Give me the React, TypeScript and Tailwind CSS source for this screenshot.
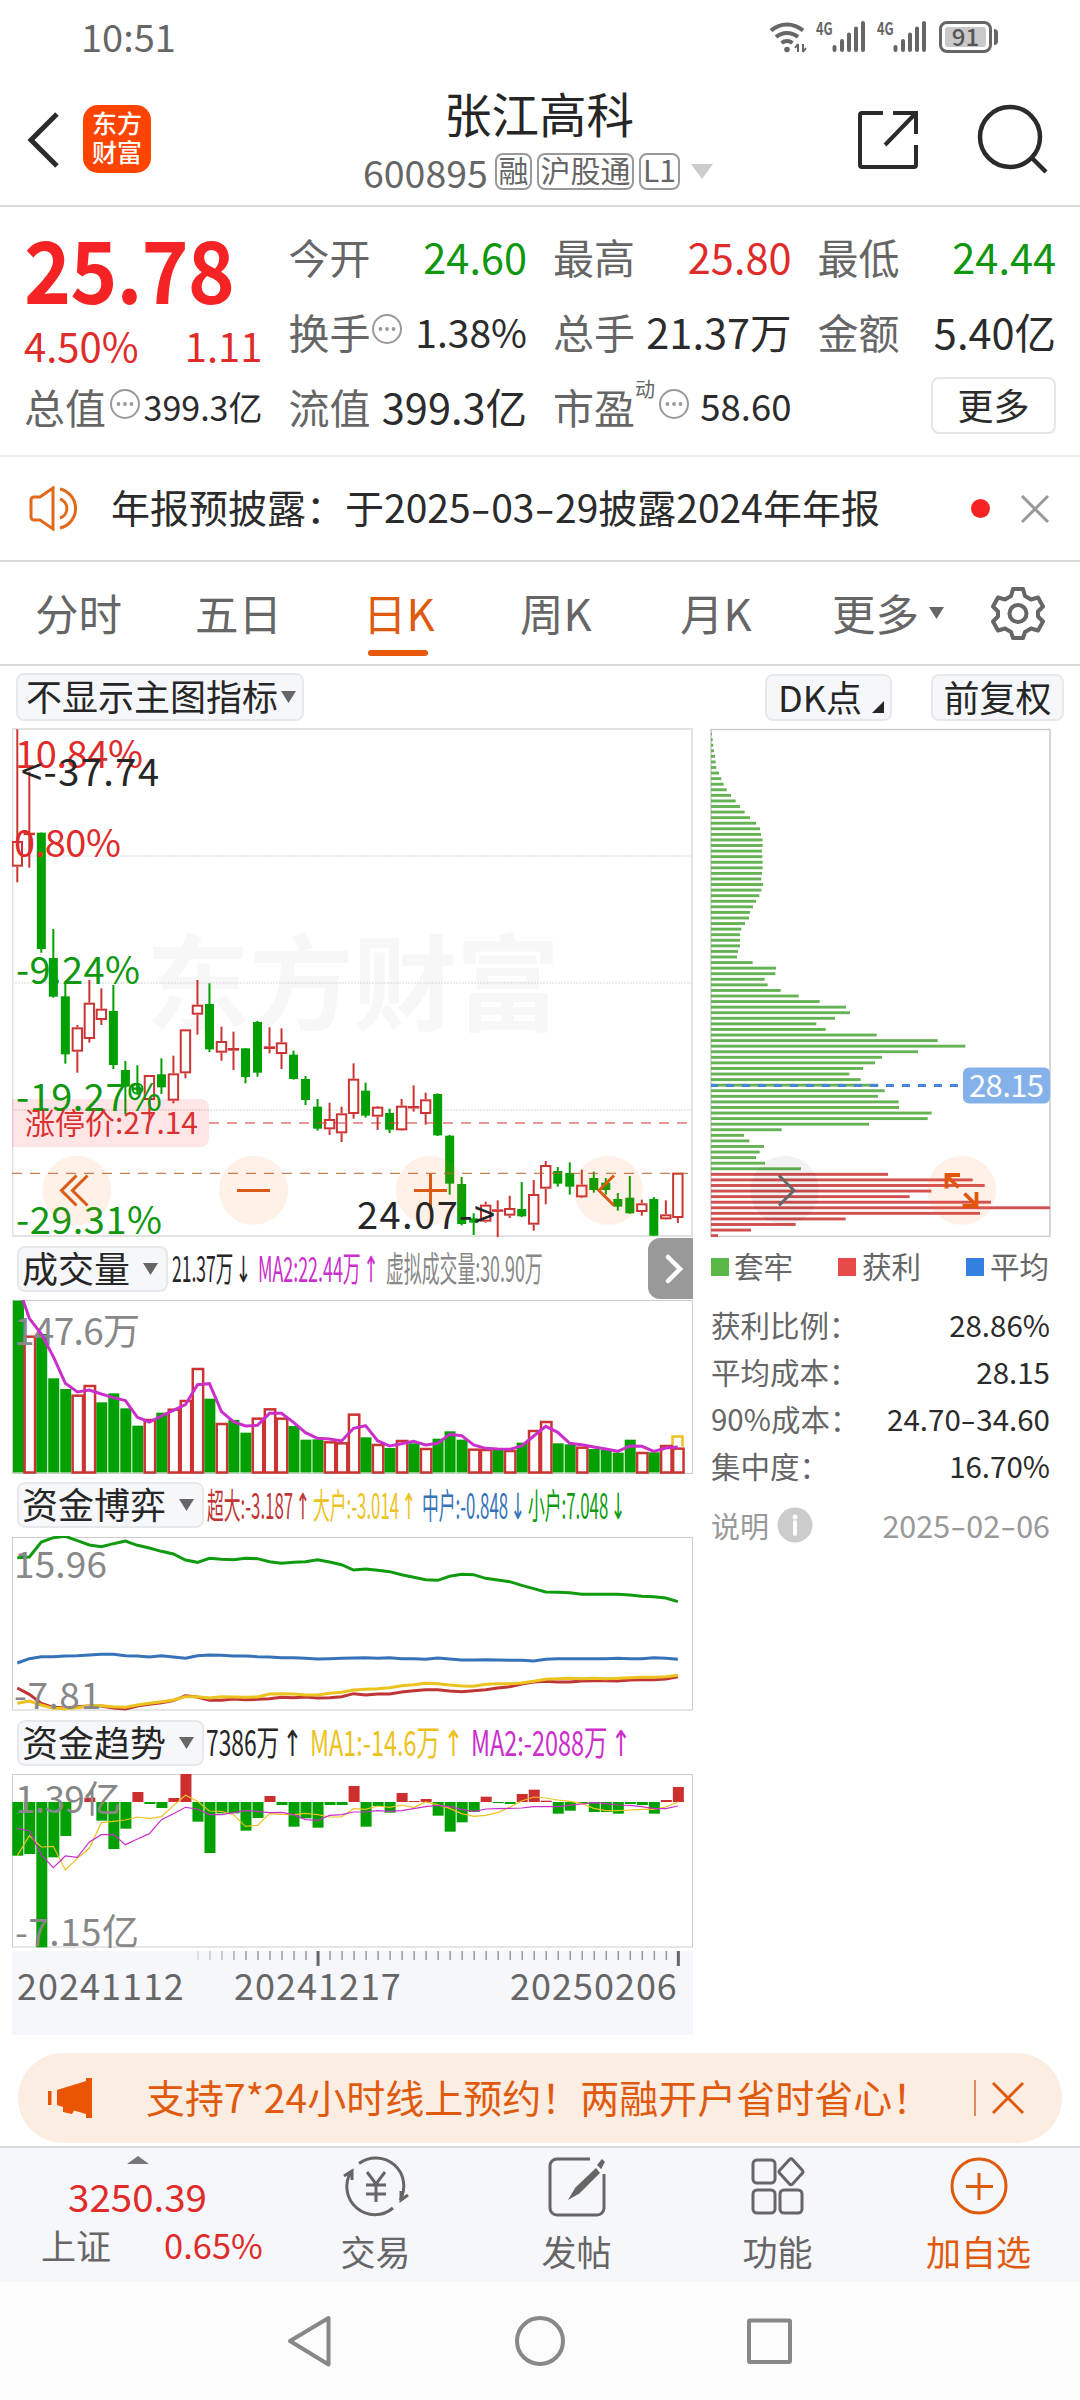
import React from "react";

const GREEN = "#00a000";
const RED = "#cc3333";

// [high, top, bottom, low, isUp] in thirds of a pixel from the top of the chart
const candles: [number, number, number, number, number][] = [
  [28, 363, 440, 487, 1], [155, 338, 345, 443, 1], [338, 338, 687, 698, 0], [627, 714, 830, 833, 0],
  [792, 829, 1003, 1031, 0], [915, 922, 995, 1058, 1], [780, 848, 957, 968, 1], [805, 866, 900, 915, 1],
  [795, 873, 1035, 1047, 0], [1023, 1050, 1100, 1182, 0], [1036, 1103, 1109, 1115, 0], [1065, 1065, 1140, 1200, 1],
  [1015, 1063, 1102, 1122, 0], [1007, 1060, 1142, 1150, 1], [928, 928, 1060, 1075, 1], [780, 854, 884, 944, 1],
  [790, 852, 988, 996, 0], [920, 963, 998, 1022, 1], [935, 984, 992, 1050, 1], [985, 985, 1071, 1090, 0],
  [903, 906, 1058, 1070, 0], [922, 979, 987, 1000, 1], [925, 967, 1002, 1047, 1], [992, 1004, 1077, 1079, 0],
  [1068, 1077, 1140, 1155, 0], [1137, 1160, 1226, 1232, 0], [1148, 1197, 1228, 1245, 1], [1160, 1180, 1240, 1266, 1],
  [1030, 1076, 1182, 1196, 1], [1088, 1112, 1187, 1193, 0], [1158, 1160, 1190, 1230, 1], [1166, 1179, 1229, 1239, 0],
  [1137, 1157, 1231, 1232, 1], [1096, 1158, 1165, 1175, 1], [1118, 1138, 1182, 1214, 1], [1120, 1122, 1246, 1248, 0],
  [1245, 1247, 1391, 1424, 0], [1371, 1392, 1512, 1516, 0], [1480, 1495, 1508, 1545, 0], [1445, 1454, 1505, 1508, 1],
  [1441, 1468, 1475, 1551, 1], [1427, 1464, 1487, 1494, 1], [1386, 1467, 1489, 1491, 0], [1380, 1422, 1514, 1532, 1],
  [1323, 1335, 1406, 1453, 1], [1341, 1353, 1391, 1400, 0], [1327, 1359, 1400, 1424, 0], [1349, 1394, 1432, 1434, 1],
  [1355, 1374, 1410, 1418, 0], [1374, 1388, 1410, 1424, 0], [1419, 1437, 1460, 1472, 0], [1368, 1433, 1480, 1481, 0],
  [1439, 1450, 1476, 1487, 1], [1431, 1437, 1547, 1547, 0], [1441, 1483, 1498, 1499, 1], [1358, 1358, 1494, 1509, 1],
];

const volumes = [
  212, 317, 312, 445, 477, 494, 465, 517, 490, 535, 587, 567, 548, 536, 510, 414, 506, 579, 570, 608, 563, 535, 563, 588,
  629, 628, 634, 637, 551, 622, 642, 654, 630, 640, 654, 626, 604, 629, 656, 657, 659, 660, 638, 600, 573, 640, 643, 650,
  657, 660, 668, 629, 666, 667, 645, 653,
];
const volumeUp = [1, 5, 6, 11, 13, 14, 15, 17, 20, 21, 22, 26, 27, 28, 30, 32, 34, 38, 39, 41, 43, 44, 47, 52, 54, 55];
const volumeMa = [
  160, 265, 312, 380, 460, 486, 480, 492, 503, 512, 562, 576, 558, 541, 524, 464, 461, 545, 575, 588, 586, 550, 550, 577,
  608, 625, 627, 633, 595, 587, 632, 648, 641, 634, 645, 640, 613, 617, 645, 655, 657, 658, 648, 618, 589, 607, 640, 644,
  651, 657, 664, 648, 649, 664, 654, 651,
];

const small = [
  983, 981, 936, 923, 919, 932, 945, 950, 941, 933, 946, 954, 964, 972, 990, 997, 985, 988, 989, 985, 986, 995, 1000, 997,
  995, 989, 996, 1004, 1020, 1017, 1021, 1025, 1034, 1042, 1049, 1051, 1039, 1033, 1034, 1045, 1050, 1055, 1066, 1076,
  1086, 1087, 1088, 1093, 1093, 1093, 1093, 1095, 1099, 1100, 1104, 1115,
];
const middle = [
  1299, 1286, 1280, 1280, 1278, 1277, 1275, 1273, 1273, 1277, 1278, 1281, 1277, 1281, 1285, 1277, 1275, 1276, 1278, 1278,
  1280, 1281, 1283, 1283, 1285, 1287, 1286, 1285, 1284, 1283, 1285, 1283, 1286, 1286, 1288, 1284, 1287, 1290, 1290, 1289,
  1290, 1291, 1291, 1293, 1288, 1286, 1286, 1286, 1286, 1286, 1285, 1286, 1286, 1283, 1285, 1288,
];
const superBig = [
  1374, 1393, 1420, 1432, 1434, 1430, 1428, 1428, 1434, 1437, 1428, 1423, 1418, 1412, 1397, 1401, 1411, 1411, 1407, 1409,
  1408, 1406, 1402, 1403, 1401, 1404, 1403, 1400, 1391, 1395, 1392, 1392, 1386, 1382, 1379, 1379, 1383, 1385, 1382, 1379,
  1374, 1370, 1362, 1356, 1354, 1356, 1356, 1353, 1352, 1352, 1353, 1350, 1349, 1349, 1347, 1340,
];
const big = [
  1420, 1413, 1425, 1435, 1436, 1433, 1427, 1427, 1430, 1432, 1425, 1420, 1415, 1410, 1400, 1400, 1404, 1400, 1401, 1402,
  1401, 1392, 1391, 1392, 1395, 1395, 1390, 1387, 1380, 1378, 1376, 1373, 1367, 1364, 1360, 1361, 1365, 1368, 1369, 1363,
  1361, 1361, 1359, 1354, 1348, 1346, 1345, 1346, 1345, 1346, 1345, 1343, 1342, 1342, 1340, 1336,
];

const trend = [
  497, 492, 772, 502, 438, 336, 323, 392, 477, 416, 306, 342, 354, 324, 252, 395, 489, 370, 370, 422, 384, 318, 345, 410,
  385, 413, 345, 345, 288, 410, 348, 368, 309, 333, 327, 377, 425, 397, 366, 320, 339, 342, 312, 299, 332, 371, 362, 340,
  366, 366, 371, 342, 345, 371, 330, 291,
];
const trendMa1 = [
  497, 437, 471, 469, 540, 505, 475, 398, 394, 390, 381, 386, 380, 347, 316, 334, 363, 364, 374, 409, 406, 371, 373, 374,
  370, 374, 381, 381, 356, 358, 348, 352, 345, 353, 336, 344, 355, 371, 379, 376, 368, 352, 333, 321, 324, 330, 334, 340,
  355, 362, 362, 360, 358, 358, 351, 336,
];
const trendMa2 = [
  415, 422, 495, 533, 498, 502, 456, 434, 433, 464, 447, 431, 389, 371, 352, 357, 374, 374, 368, 362, 364, 368, 367, 374,
  389, 391, 376, 374, 366, 366, 362, 364, 362, 356, 350, 346, 350, 358, 365, 357, 356, 355, 354, 350, 350, 350, 346, 342,
  338, 341, 345, 346, 350, 356, 356, 348,
];

const chips = [
  66, 68, 70, 72, 75, 77, 79, 87, 94, 101, 110, 123, 137, 150, 164, 180, 198, 210, 213, 218, 218, 216, 217, 218, 218, 216,
  214, 219, 214, 208, 198, 189, 180, 177, 165, 154, 150, 150, 150, 144, 141, 188, 258, 256, 224, 233, 272, 326, 389, 468,
  480, 435, 379, 407, 560, 743, 826, 684, 576, 555, 519, 478, 512, 565, 584, 564, 626, 627, 725, 713, 537, 275, 162, 178,
  222, 209, 198, 225, 333, 594, 848, 884, 724, 659, 903, 1080, 870, 467, 317, 183, 84,
];

const cx = (i: number) => 17.3 + i * 12.01;
const points = (data: number[], base: number) => data.map((v, i) => `${cx(i)},${base + v / 3}`).join(" ");

function Candles() {
  return (
    <svg className="block" width="681" height="509" viewBox="12 728 681 509">
      <text x="146" y="1023" fontSize="104" fontWeight="700" fill="#f7f7f7" textLength="414">东方财富</text>
      {[856, 983, 1110].map((y) => (
        <line key={y} x1="12" x2="692" y1={y} y2={y} stroke="#e3e3e3" strokeWidth="1.5" strokeDasharray="2 1" />
      ))}
      <rect x="12.5" y="729" width="679.5" height="507" fill="none" stroke="#e2e2e2" strokeWidth="2" />
      {candles.map(([h, t, b, l, up], i) => {
        const x = cx(i);
        const y = (v: number) => 720 + v / 3;
        if (!up) {
          return (
            <g key={i} fill={GREEN}>
              <rect x={x - 1} y={y(h)} width="2" height={(l - h) / 3} />
              <rect x={x - 4.5} y={y(t)} width="9" height={(b - t) / 3} />
            </g>
          );
        }
        return (
          <g key={i} stroke={RED} strokeWidth="2">
            <line x1={x} x2={x} y1={y(h)} y2={y(t)} />
            <line x1={x} x2={x} y1={y(b)} y2={y(l)} />
            <rect x={x - 4.7} y={y(t) + 1} width="9.4" height={Math.max((b - t) / 3 - 2, 0.5)} fill={b - t > 13 ? "#fff" : RED} />
          </g>
        );
      })}
      <g fill="none" stroke={GREEN} strokeWidth="2">
        <circle cx="137.5" cy="1088.7" r="5" />
        <path d="M132 1088.7h11M137.5 1083v11" />
      </g>
      <path d="M12 1099h189a8 8 0 0 1 8 8v32a8 8 0 0 1-8 8H12z" fill="#ff0000" fillOpacity=".1" />
      <line x1="209" x2="690" y1="1123" y2="1123" stroke="#d43c3c" strokeOpacity=".7" strokeWidth="1.7" strokeDasharray="10 8" />
      <line x1="12" x2="690" y1="1173.3" y2="1173.3" stroke="#b9622c" strokeOpacity=".8" strokeWidth="1.3" strokeDasharray="10 8" />
      <g fontSize="38">
        <g fill="#e02b2b">
          <text x="15" y="768" textLength="128">10.84%</text>
          <text x="14" y="857" textLength="107">0.80%</text>
        </g>
        <text x="21" y="786" textLength="138" fill="#262626">&lt;-37.74</text>
        <g fill="#0f970f">
          <text x="16" y="984" textLength="124">-9.24%</text>
          <text x="16" y="1111" textLength="146">-19.27%</text>
          <text x="16" y="1234" textLength="146">-29.31%</text>
        </g>
      </g>
      <text x="25" y="1133.5" fontSize="30" textLength="173" fill="#d93030">涨停价:27.14</text>
      <g fill="#ff6a1a" fillOpacity=".1">
        <circle cx="76.7" cy="1190.3" r="34.5" />
        <circle cx="253.6" cy="1190.3" r="34.5" />
        <circle cx="430.3" cy="1190.3" r="34.5" />
        <circle cx="608.3" cy="1190.3" r="34.5" />
      </g>
      <g fill="none" stroke="#d95a14" strokeWidth="3">
        <path d="M76.5 1175.5l-15 15 15 15M87.5 1175.5l-15 15 15 15" />
        <path d="M237 1190.5h33M414 1190.5h33M430.5 1174v33" />
        <path d="M614 1175.5l-15 15 15 15" />
      </g>
      <text x="357" y="1229" fontSize="38" textLength="138" fill="#262626">24.07-&gt;</text>
    </svg>
  );
}

function VolumeChart() {
  return (
    <svg className="block" width="681" height="174" viewBox="12 1300 681 174">
      <rect x="12.5" y="1300.5" width="680" height="173" fill="none" stroke="#ccc" />
      <path d="M672.5 1446.5v-10h10v10" fill="none" stroke="#ecc21e" strokeWidth="2.5" />
      {volumes.map((v, i) => {
        const y = 1230 + v / 3;
        const x = cx(i) + 0.5;
        return volumeUp.includes(i) ? (
          <rect key={i} x={x - 5.2} y={y + 1} width="10.4" height={1471.5 - y} fill="#fff" stroke={RED} strokeWidth="2.5" />
        ) : (
          <rect key={i} x={Math.max(x - 5.6, 13)} y={y} width="11" height={1472.5 - y} fill={GREEN} />
        );
      })}
      <text x="14" y="1345" fontSize="37" textLength="126" fill="#888">147.6万</text>
      <polyline points={points(volumeMa, 1230)} fill="none" stroke="#cb2fcb" strokeWidth="3" />
    </svg>
  );
}

function FundChart() {
  return (
    <svg className="block" width="681" height="175" viewBox="12 1536 681 175">
      <rect x="12.5" y="1537.5" width="680" height="172.5" fill="none" stroke="#ccc" />
      <g fill="none" strokeWidth="3">
        <polyline points={points(small, 1230)} stroke="#109a10" />
        <polyline points={points(middle, 1230)} stroke="#3672b8" />
        <polyline points={points(superBig, 1230)} stroke="#bf3535" />
        <polyline points={points(big, 1230)} stroke="#ecc21e" />
      </g>
      <text x="14" y="1577.5" fontSize="37" textLength="93" fill="#888">15.96</text>
      <text x="14" y="1709" fontSize="37" textLength="87" fill="#888">-7.81</text>
    </svg>
  );
}

function TrendChart() {
  return (
    <svg className="block" width="681" height="174" viewBox="12 1774 681 174">
      <rect x="12.5" y="1774.5" width="680" height="172.5" fill="none" stroke="#ccc" />
      {trend.map((v, i) => (
        <rect
          key={i}
          x={Math.max(cx(i) - 5, 12)}
          y={1690 + Math.min(v, 336) / 3}
          width="11"
          height={Math.abs(v - 336) / 3}
          fill={v < 336 ? "#cd2f2f" : GREEN}
        />
      ))}
      <polyline points={points(trendMa1, 1690)} fill="none" stroke="#ecc21e" strokeWidth="1.2" />
      <polyline points={points(trendMa2, 1690)} fill="none" stroke="#cb2fcb" strokeWidth="1.2" />
      <text x="15" y="1813" fontSize="37" textLength="106" fill="#888">1.39亿</text>
      <text x="15" y="1945.5" fontSize="37" textLength="124" fill="#888">-7.15亿</text>
    </svg>
  );
}

function TimeAxis() {
  return (
    <div className="mt-[3px] h-[84px] w-[681px] bg-[#f6f7fa]">
      <svg className="block" width="681" height="15" viewBox="12 1951 681 15">
        {Array.from({ length: 41 }, (_, k) => k + 15).map((i) => {
          const major = i === 25 || i === 55;
          return (
            <line
              key={i}
              x1={cx(i) + 0.5}
              x2={cx(i) + 0.5}
              y1="1951"
              y2={major ? 1966 : 1960}
              stroke={major ? "#666" : "#999"}
              strokeOpacity={Math.min(1, (i - 13) / 6)}
              strokeWidth={major ? 3 : 1.5}
            />
          );
        })}
      </svg>
      <div className="flex text-[36px] leading-none tracking-[1px] text-[#666]">
        <span className="ml-[5px] w-[217px]">20241112</span>
        <span className="w-[276px]">20241217</span>
        <span>20250206</span>
      </div>
    </div>
  );
}

function ChipChart() {
  return (
    <svg className="block" width="342" height="509" viewBox="710 728 342 509">
      <rect x="711" y="729.5" width="339" height="507" fill="none" stroke="#c9c9c9" strokeWidth="1.5" />
      {chips.map((v, k) => (
        <rect key={k} x="711" y={720 + (42 + k * 16.72) / 3 - 1.4} width={690 + v / 3 - 711} height="2.9" fill={k < 79 ? "#65b354" : "#d35050"} />
      ))}
      <line x1="711" x2="718" y1="1085.5" y2="1085.5" stroke="#4484d6" strokeWidth="3" />
      <line x1="726" x2="960" y1="1085.5" y2="1085.5" stroke="#4484d6" strokeWidth="3" strokeDasharray="8 8" />
      <rect x="963" y="1067.5" width="87" height="36" rx="6" fill="#85b1ea" />
      <text x="969" y="1097" fontSize="31" textLength="75" fill="#fff">28.15</text>
      <circle cx="784.7" cy="1190.3" r="34.5" fill="#000" fillOpacity=".05" />
      <path d="M779 1175.5l15 15-15 15" fill="none" stroke="#666" strokeWidth="3" />
      <circle cx="961.7" cy="1190.3" r="34.5" fill="#ff6a1a" fillOpacity=".1" />
      <path
        d="M946.5 1188.5v-13.500h13.500M946.5 1175.5l12 12M976.5 1192v14h-14M976.5 1205.5l-12-12"
        fill="none"
        stroke="#e2560c"
        strokeWidth="3.8"
      />
    </svg>
  );
}

function Dots() {
  return (
    <svg className="mb-[6px] shrink-0" width="32" height="32" viewBox="0 0 32 32">
      <circle cx="16" cy="16" r="14" fill="none" stroke="#999" strokeWidth="2" />
      <g fill="#999">
        <circle cx="9.5" cy="16" r="1.9" />
        <circle cx="16" cy="16" r="1.9" />
        <circle cx="22.5" cy="16" r="1.9" />
      </g>
    </svg>
  );
}

// Digits joined by wide hyphens
function Dashed({ text }: { text: string }) {
  return (
    <>
      {text.split("-").map((part, i) => (
        <React.Fragment key={i}>
          {i > 0 && <span className="mx-[.09em] inline-block scale-x-150">-</span>}
          {part}
        </React.Fragment>
      ))}
    </>
  );
}

type QuoteProps = {
  label: string;
  value: string;
  color?: string;
  size?: string;
  extra?: React.ReactNode;
};

function Quote({ label, value, color = "text-[#2b2b2b]", size = "text-[41.5px]", extra }: QuoteProps) {
  return (
    <div className="flex h-[75px] items-center whitespace-nowrap">
      <span className="text-[41px] text-[#666]">{label}</span>
      {extra}
      <span className={`ml-auto ${size} ${color}`}>{value}</span>
    </div>
  );
}

function Caret({ className = "" }: { className?: string }) {
  return (
    <svg className={className} width="15" height="12" viewBox="0 0 15 12">
      <path d="M0 0h15L7.500 12z" fill="#666" />
    </svg>
  );
}

function Indicator({ name, width, children }: { name: string; width: string; children: React.ReactNode }) {
  return (
    <div className="flex items-center text-[35px] leading-none whitespace-nowrap">
      <div className={`ml-[5px] flex h-[46px] items-center justify-between rounded-lg border-2 border-[#e6e8ec] bg-[#f6f7fa] pr-[8px] pl-[3px] ${width}`}>
        <span className="pb-1 text-[36px] text-[#262626]">{name}</span>
        <Caret />
      </div>
      {children}
    </div>
  );
}

function Squeezed({ box, scale, children }: { box: string; scale: string; children: React.ReactNode }) {
  return (
    <span className={`h-[39px] ${box}`}>
      <span className={`inline-block h-[35px] origin-left ${scale}`}>{children}</span>
    </span>
  );
}

function Arrow({ down = false }: { down?: boolean }) {
  return <span className="ml-[5px] font-['DejaVu_Sans'] text-[36px] leading-none">{down ? "↓" : "↑"}</span>;
}

function Signal() {
  return (
    <div className="flex items-start">
      <span className="w-[16px] text-[17px] leading-[14px] font-bold">
        <span className="inline-block origin-left scale-x-75">4G</span>
      </span>
      <svg width="34" height="31" viewBox="0 0 34 31">
        <path d="M2.500 26v3M10 20v9M17 13.500v15.500M24 7.500v21.500M31 2v27" stroke="#666" strokeWidth="4" strokeLinecap="round" />
      </svg>
    </div>
  );
}

function StatusBar() {
  return (
    <div className="flex h-[74px] items-center pr-[82px] pl-[81px] text-[#666]">
      <span className="pb-[3px] text-[38px] leading-none">10:51</span>
      <div className="ml-auto flex items-center pb-px">
        <svg width="38" height="32" viewBox="0 0 38 32" fill="none" stroke="#666" strokeWidth="4">
          <path d="M2 9.500a24 24 0 0 1 32 0M7 16a17 17 0 0 1 22 0M12.500 22a9 9 0 0 1 11 0" />
          <circle cx="18" cy="28.5" r="2.8" fill="#666" stroke="none" />
          <path d="M29 23v8M29 23l-3 4M34 31v-8M34 31l3-4" strokeWidth="2" />
        </svg>
        <div className="ml-[9px] flex gap-[11px]">
          <Signal />
          <Signal />
        </div>
        <div className="ml-[12px] flex h-[32px] w-[53px] items-center justify-center rounded-[8px] border-[3px] border-[#666] p-[3px]">
          <span className="h-full w-full rounded-[3px] bg-[#c9c9c9] text-center text-[24px] leading-[18px] font-medium text-[#555]">91</span>
        </div>
        <span className="ml-[2px] h-[16px] w-[4px] rounded-r bg-[#666]" />
      </div>
    </div>
  );
}

function Header() {
  return (
    <div className="flex h-[133px] items-start border-b-2 border-[#d9d9d9]">
      <svg className="mt-[38px] ml-[26px]" width="34" height="56" viewBox="0 0 34 56">
        <path d="M31 2L5 28l26 26" fill="none" stroke="#2b2b2b" strokeWidth="5" />
      </svg>
      <div className="mt-[31px] ml-[23px] flex h-[68px] w-[68px] flex-col items-center justify-center rounded-[15px] bg-[#ff4400] pb-1 text-[25px] leading-[29px] font-medium text-white">
        <span>东方</span>
        <span>财富</span>
      </div>
      <div className="ml-[212px] flex w-[350px] flex-col">
        <h1 className="mt-[15px] ml-[81px] text-[47.5px] leading-none whitespace-nowrap text-[#262626]">张江高科</h1>
        <div className="mt-[16px] flex h-[38px] items-center text-[#666]">
          <span className="w-[132px] text-[37.5px] leading-none">600895</span>
          <div className="flex gap-[5px] text-[30px] leading-[29px]">
            <span className="flex h-[37px] w-[37px] justify-center rounded-lg border-2 border-[#999]">融</span>
            <span className="flex h-[37px] w-[97px] justify-center rounded-lg border-2 border-[#999]">沪股通</span>
            <span className="flex h-[37px] w-[41px] justify-center rounded-lg border-2 border-[#999]">L1</span>
          </div>
          <svg className="ml-[11px]" width="22" height="15" viewBox="0 0 22 15">
            <path d="M0 0h22L11 15z" fill="#ccc" />
          </svg>
        </div>
      </div>
      <svg className="mt-[36px] ml-[144px]" width="62" height="60" viewBox="0 0 62 60" fill="none" stroke="#2b2b2b" strokeWidth="4">
        <path d="M26 3H5a2 2 0 0 0-2 2v50a2 2 0 0 0 2 2h52a2 2 0 0 0 2-2V35M36 3h23v21M58 4L28 35" />
      </svg>
      <svg className="mt-[29px] ml-[57px]" width="74" height="74" viewBox="0 0 74 74" fill="none" stroke="#2b2b2b" strokeWidth="4.5">
        <circle cx="34" cy="34" r="30" />
        <path d="M56 55l14 14" />
      </svg>
    </div>
  );
}

function QuotePanel() {
  return (
    <div className="grid h-[250px] grid-cols-4 gap-x-[26px] border-b-2 border-[#ebebeb] px-[24px] pt-[12px] leading-none">
      <div className="flex flex-col text-[#e02b2b]">
        <div className="h-[98px] pt-[5px] text-[#f52323]">
          <span className="inline-block origin-left scale-x-[.93] text-[86px] leading-none font-bold tracking-[-1px]">25.78</span>
        </div>
        <div className="flex h-[52px] items-center justify-between pt-[3px] text-[40px]">
          <span>4.50%</span>
          <span>1.11</span>
        </div>
        <div className="flex h-[75px] items-center justify-between whitespace-nowrap">
          <span className="text-[41px] text-[#666]">总值</span>
          <Dots />
          <span className="text-[34px] text-[#2b2b2b]">399.3亿</span>
        </div>
      </div>
      <div>
        <Quote label="今开" value="24.60" color="text-[#0f970f]" />
        <Quote label="换手" value="1.38%" size="text-[39px]" extra={<Dots />} />
        <Quote label="流值" value="399.3亿" />
      </div>
      <div>
        <Quote label="最高" value="25.80" color="text-[#e02b2b]" />
        <Quote label="总手" value="21.37万" />
        <div className="flex h-[75px] items-center">
          <span className="text-[41px] text-[#666]">市盈</span>
          <span className="mr-[3px] mb-[36px] text-[20px] text-[#666]">动</span>
          <Dots />
          <span className="ml-auto text-[36.5px] text-[#2b2b2b]">58.60</span>
        </div>
      </div>
      <div>
        <Quote label="最低" value="24.44" color="text-[#0f970f]" />
        <Quote label="金额" value="5.40亿" />
        <div className="mt-[8px] ml-auto flex h-[57px] w-[125px] items-center justify-center rounded-lg border-2 border-[#e6e6e6] pb-1 text-[36px] text-[#2b2b2b]">更多</div>
      </div>
    </div>
  );
}

function Notice() {
  return (
    <div className="flex h-[105px] items-center border-b-2 border-[#d9d9d9]">
      <svg className="ml-[29px]" width="52" height="46" viewBox="0 0 52 46" fill="none" stroke="#e06a1a" strokeWidth="3">
        <path d="M24 2L11 11H5a3 3 0 0 0-3 3v17a3 3 0 0 0 3 3h6l13 9zM31 3a20 20 0 0 1 0 39M31 13a10 10 0 0 1 0 19" />
      </svg>
      <span className="ml-[30px] w-[860px] pb-1 text-[39px] leading-none whitespace-nowrap text-[#2b2b2b]">
        年报预披露：于
        <Dashed text="2025-03-29" />
        披露2024年年报
      </span>
      <span className="h-[19px] w-[19px] rounded-full bg-[#f52323]" />
      <svg className="ml-[30px]" width="30" height="30" viewBox="0 0 30 30">
        <path d="M2 2l26 26M28 2L2 28" stroke="#999" strokeWidth="3" />
      </svg>
    </div>
  );
}

function Tabs() {
  return (
    <div className="flex h-[104px] items-center border-b-2 border-[#d9d9d9] text-[43.5px] leading-none whitespace-nowrap text-[#666]">
      <span className="ml-[35px] w-[160px]">分时</span>
      <span className="w-[168px]">五日</span>
      <div className="relative w-[157px] text-[#e05a0e]">
        日K
        <span className="absolute top-[59px] left-[5px] h-[6px] w-[60px] rounded-full bg-[#e8590c]" />
      </div>
      <span className="w-[160px]">周K</span>
      <span className="w-[152px]">月K</span>
      <span className="w-[97px]">更多</span>
      <Caret />
      <svg className="ml-[47px]" width="54" height="54" viewBox="0 0 54 54" fill="none" stroke="#666" strokeWidth="4" strokeLinejoin="round">
        <path d="M22 3h10l2 7 6 3.500 7-2 5 9-5 5v5l5 5-5 9-7-2-6 3.500-2 6H22l-2-6-6-3.500-7 2-5-9 5-5v-5l-5-5 5-9 7 2 6-3.500z" />
        <circle cx="27" cy="27.5" r="8.5" />
      </svg>
    </div>
  );
}

function Options() {
  return (
    <div className="flex h-[62px] items-start pt-[7px] text-[36px] leading-none whitespace-nowrap text-[#262626]">
      <div className="ml-[16px] flex h-[48px] w-[288px] items-center rounded-lg border-2 border-[#e6e8ec] bg-[#f6f7fa] pl-[8px]">
        <span className="pb-1">不显示主图指标</span>
        <Caret className="ml-[3px]" />
      </div>
      <div className="mt-px ml-[461px] flex h-[47px] w-[127px] items-center rounded-lg border-2 border-[#e6e8ec] bg-[#f6f7fa] pl-[11px]">
        <span className="pb-1">DK点</span>
        <svg className="mt-[19px] ml-[10px]" width="12" height="12" viewBox="0 0 12 12">
          <path d="M12 0v12H0z" fill="#262626" />
        </svg>
      </div>
      <div className="mt-px ml-[39px] flex h-[47px] w-[133px] items-center justify-center rounded-lg border-2 border-[#e6e8ec] bg-[#f6f7fa] pb-1">前复权</div>
    </div>
  );
}

const stats = [
  ["获利比例：", "28.86%"],
  ["平均成本：", "28.15"],
  ["90%成本：", "24.70-34.60"],
  ["集中度：", "16.70%"],
];

function ChipPanel() {
  return (
    <div className="w-[342px] leading-none">
      <ChipChart />
      <div className="flex h-[60px] items-center pl-px text-[29.5px] text-[#666]">
        <span className="h-[18px] w-[18px] bg-[#5ab946]" />
        <span className="ml-[5px] w-[104px] pb-[3px]">套牢</span>
        <span className="h-[18px] w-[18px] bg-[#e84a4a]" />
        <span className="ml-[6px] w-[104px] pb-[3px]">获利</span>
        <span className="h-[18px] w-[18px] bg-[#3480e0]" />
        <span className="ml-[6px] pb-[3px]">平均</span>
      </div>
      <div className="mt-[4px] pr-[2px] pl-px">
        {stats.map(([label, value]) => (
          <div key={label} className="flex h-[47px] items-center justify-between text-[29.5px] whitespace-nowrap text-[#666]">
            <span>{label}</span>
            <span className="text-[#2b2b2b]">
              <Dashed text={value} />
            </span>
          </div>
        ))}
        <div className="mt-[11px] flex h-[50px] items-center text-[29px] whitespace-nowrap text-[#999]">
          <span>说明</span>
          <svg className="ml-[8px]" width="36" height="36" viewBox="0 0 36 36">
            <circle cx="18" cy="18" r="17.5" fill="#ccc" />
            <path d="M18 15v12" stroke="#fff" strokeWidth="4" strokeLinecap="round" />
            <circle cx="18" cy="10" r="2.5" fill="#fff" />
          </svg>
          <span className="ml-auto text-[30.5px]">
            <Dashed text="2025-02-06" />
          </span>
        </div>
      </div>
    </div>
  );
}

function ChartColumn() {
  return (
    <div className="w-[681px]">
      <Candles />
      <div className="relative flex h-[63px] items-center">
        <Indicator name="成交量" width="w-[151px]">
          <Squeezed box="ml-[4px] w-[86px] text-[#262626]" scale="scale-x-50">21.37万<Arrow down /></Squeezed>
          <Squeezed box="w-[128px] text-[#cb2fcb]" scale="scale-x-[.51]">MA2:22.44万<Arrow /></Squeezed>
          <Squeezed box="w-[150px] text-[#888]" scale="scale-x-[.51]">虚拟成交量:30.90万</Squeezed>
        </Indicator>
        <div className="absolute top-px right-0 flex h-[61px] w-[45px] items-center justify-center rounded-l-[12px] bg-[#999]">
          <svg className="ml-[6px]" width="18" height="30" viewBox="0 0 18 30">
            <path d="M3 3l12 12L3 27" fill="none" stroke="#fff" strokeWidth="4.5" strokeLinecap="round" />
          </svg>
        </div>
      </div>
      <VolumeChart />
      <div className="flex h-[62px] items-center">
        <Indicator name="资金博弈" width="w-[187px]">
          <Squeezed box="ml-[3px] w-[106px] text-[#bf3535]" scale="scale-x-[.48]">超大:-3.187<Arrow /></Squeezed>
          <Squeezed box="w-[109px] text-[#ecc21e]" scale="scale-x-[.48]">大户:-3.014<Arrow /></Squeezed>
          <Squeezed box="w-[106px] text-[#3672b8]" scale="scale-x-[.48]">中户:-0.848<Arrow down /></Squeezed>
          <Squeezed box="w-[100px] text-[#109a10]" scale="scale-x-[.48]">小户:7.048<Arrow down /></Squeezed>
        </Indicator>
      </div>
      <FundChart />
      <div className="flex h-[63px] items-center">
        <Indicator name="资金趋势" width="w-[187px]">
          <Squeezed box="ml-[2px] w-[104px] text-[#262626]" scale="scale-x-[.65]">7386万<Arrow /></Squeezed>
          <Squeezed box="w-[161px] text-[#ecc21e]" scale="scale-x-[.67]">MA1:-14.6万<Arrow /></Squeezed>
          <Squeezed box="w-[160px] text-[#cb2fcb]" scale="scale-x-[.67]">MA2:-2088万<Arrow /></Squeezed>
        </Indicator>
      </div>
      <TrendChart />
      <TimeAxis />
    </div>
  );
}

function Banner() {
  return (
    <div className="mt-[18px] ml-[18px] flex h-[90px] w-[1044px] items-center rounded-full bg-[#fcede3] text-[#e05a0e]">
      <svg className="ml-[29px]" width="47" height="40" viewBox="0 0 47 40" fill="#ea5504">
        <path d="M1 13h3.500v14H1zM10 12l29-9V0h6v40h-6v-4l-12-3.500-2 3.500-9-2v-5l-6-2z" />
      </svg>
      <span className="ml-[52px] w-[828px] pb-1 text-[39px] leading-none whitespace-nowrap">支持7*24小时线上预约！两融开户省时省心！</span>
      <span className="h-[36px] w-[2px] bg-[#e08a5a]" />
      <svg className="ml-[15px]" width="34" height="34" viewBox="0 0 34 34">
        <path d="M2 2l30 30M32 2L2 32" stroke="#e05a0e" strokeWidth="3" />
      </svg>
    </div>
  );
}

function NavItem({ label, color = "text-[#666]", children }: { label: string; color?: string; children: React.ReactNode }) {
  return (
    <div className={`flex w-[201px] flex-col items-center pt-[7px] ${color}`}>
      <svg width="66" height="62" viewBox="0 0 66 62" fill="none" stroke="currentColor" strokeWidth="3">
        {children}
      </svg>
      <span className="mt-[16px] text-[35px] leading-none">{label}</span>
    </div>
  );
}

function BottomNav() {
  return (
    <div className="mt-[3px] flex h-[136px] border-t-2 border-[#d9dadc] bg-[#f6f7fa] leading-none">
      <div className="flex w-[275px] flex-col items-center pt-[8px]">
        <svg width="22" height="8" viewBox="0 0 22 8">
          <path d="M0 8L11 0l11 8z" fill="#777" />
        </svg>
        <span className="mt-[12px] text-[38.5px]">
          <span className="text-[#e02b2b]">3250.39</span>
        </span>
        <div className="mt-[12px] flex w-full items-center pl-[41px] text-[35px]">
          <span className="w-[123px] text-[#666]">上证</span>
          <span className="text-[34.5px] text-[#e02b2b]">0.65%</span>
        </div>
      </div>
      <NavItem label="交易">
        <path d="M16 8.500A28 28 0 0 1 57 45M50 53A28 28 0 0 1 8 17M1 21l8-5v9M65 40l-7 5v-9M24 17l9 12 9-12M33 29v18M23 30h20M23 39h20" />
      </NavItem>
      <NavItem label="发帖">
        <path d="M46 4H13a7 7 0 0 0-7 7v42a7 7 0 0 0 7 7h40a7 7 0 0 0 7-7V19" />
        <path d="M52 14L32 33l-6 10 9-5 20-20zM54 10l4-5 2 2-3 6z" fill="currentColor" strokeWidth="1.5" />
      </NavItem>
      <NavItem label="功能">
        <rect x="8" y="5" width="22" height="23" rx="4" />
        <rect x="8" y="35" width="22" height="23" rx="4" />
        <rect x="35" y="35" width="22" height="23" rx="4" />
        <path d="M44.500 4.500a2 2 0 0 1 3 0l10 11a2 2 0 0 1 0 2.500l-10 11a2 2 0 0 1-3 0l-10-11a2 2 0 0 1 0-2.500z" />
      </NavItem>
      <NavItem label="加自选" color="text-[#e05a0e]">
        <circle cx="33" cy="31" r="27" />
        <path d="M20 31.500h27M33 18v27" />
      </NavItem>
    </div>
  );
}

function SystemNav() {
  return (
    <div className="flex h-[118px] items-center bg-[#fcfcfc]">
      <svg className="ml-[286px]" width="507" height="54" viewBox="286 2314 507 54" fill="none" stroke="#888" strokeWidth="4" strokeLinejoin="round">
        <path d="M328.500 2318v46.500L290 2341z" />
        <circle cx="540" cy="2341" r="23" />
        <rect x="749" y="2320.5" width="41" height="41.5" rx="1" />
      </svg>
    </div>
  );
}

export default function App() {
  return (
    <div className="h-[2400px] w-[1080px] overflow-hidden bg-white font-['Noto_Sans_CJK_SC',sans-serif]">
      <StatusBar />
      <Header />
      <QuotePanel />
      <Notice />
      <Tabs />
      <Options />
      <div className="flex gap-[17px] pl-[12px]">
        <ChartColumn />
        <ChipPanel />
      </div>
      <Banner />
      <BottomNav />
      <SystemNav />
    </div>
  );
}
